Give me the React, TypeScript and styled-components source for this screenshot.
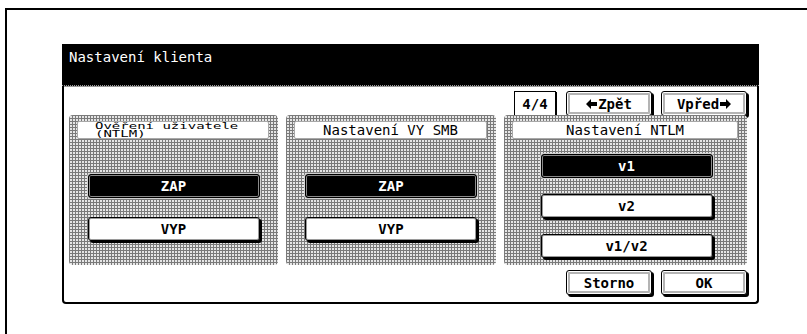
import React from 'react';
import styled, { createGlobalStyle, css } from 'styled-components';

const GlobalStyle = createGlobalStyle`
  html, body {
    margin: 0;
    padding: 0;
    background: #fff;
    overflow: hidden;
  }
  body {
    font-family: "DejaVu Sans Mono", "Liberation Mono", monospace;
    color: #000;
  }
`;

const stipple = css`
  background-color: #e6e6e6;
  background-image: linear-gradient(90deg, #7a7a7a 1px, transparent 1px),
    linear-gradient(#7a7a7a 1px, transparent 1px);
  background-size: 3px 3px;
`;

const Frame = styled.div`
  margin: 8px 0 0 5px;
  width: 802px;
  height: 326px;
  border-top: 2px solid #000;
  border-left: 2px solid #000;
  padding: 34px 0 0 55px;
  box-sizing: border-box;
`;

const Dialog = styled.div`
  width: 697px;
  display: flex;
  flex-direction: column;
`;

const TitleBar = styled.div`
  height: 42px;
  background: #000;
  color: #fff;
  font-size: 14px;
  line-height: 16px;
  padding: 5px 0 0 7px;
  box-sizing: border-box;
  border-bottom: 1px dotted #9a9a9a;
`;

const Body = styled.div`
  height: 218px;
  background: #fff;
  border: 2px solid #000;
  border-top: none;
  border-radius: 0 0 4px 4px;
  box-shadow: inset 0 1px 0 #9a9a9a;
  padding: 5px 10px 0 5px;
  box-sizing: border-box;
  display: flex;
  flex-direction: column;
`;

const NavRow = styled.div`
  display: flex;
  justify-content: flex-end;
  align-items: center;
  gap: 9px;
  height: 25px;
`;

const PageBox = styled.div`
  width: 42px;
  height: 25px;
  box-sizing: border-box;
  border: 1px solid #000;
  box-shadow: 1px 1px 0 #000;
  margin-right: 1px;
  display: flex;
  align-items: center;
  justify-content: center;
  font-size: 14px;
  font-weight: bold;
`;

const FrameButton = styled.button`
  width: 86px;
  height: 25px;
  box-sizing: border-box;
  padding: 0;
  background: #fff;
  border: 1px solid #000;
  border-radius: 3px;
  box-shadow: inset 0 0 0 1px #fff, inset 0 0 0 3px #b4b4b4,
    inset 0 0 0 4px #fff, 2px 2px 0 #000;
  font-family: "DejaVu Sans Mono", "Liberation Mono", monospace;
  font-size: 14px;
  font-weight: bold;
  color: #000;
  display: flex;
  align-items: center;
  justify-content: center;
  gap: 1px;
`;

const Arrow = styled.svg<{ $flip?: boolean }>`
  width: 11px;
  height: 10px;
  transform: ${(p) => (p.$flip ? 'scaleX(-1)' : 'none')};
`;

const Panels = styled.div`
  display: grid;
  grid-template-columns: 209px 210px 243px;
  column-gap: 8px;
  margin-top: -1px;
  height: 150px;
`;

const Panel = styled.div`
  ${stipple};
  border-radius: 4px;
  padding: 6px 9px 0 8px;
  box-sizing: border-box;
  display: flex;
  flex-direction: column;
`;

const Header = styled.div<{ $left?: boolean }>`
  height: 18px;
  background: #fff;
  border: 1px solid #a8a8a8;
  border-radius: 2px;
  box-sizing: border-box;
  display: flex;
  align-items: center;
  justify-content: ${(p) => (p.$left ? 'flex-start' : 'center')};
  padding-left: ${(p) => (p.$left ? '17px' : '0')};
  font-size: 14px;
  overflow: hidden;
`;

const SquashedText = styled.div`
  font-size: 14px;
  line-height: 12px;
  transform: scaleY(0.6);
  white-space: pre;
`;

const Options = styled.div<{ $top: number; $gap: number; $shift: number }>`
  display: flex;
  flex-direction: column;
  align-items: center;
  padding-top: ${(p) => p.$top}px;
  margin-left: ${(p) => p.$shift}px;
  gap: ${(p) => p.$gap}px;
`;

const Option = styled.button<{ $on?: boolean }>`
  width: 172px;
  height: 24px;
  box-sizing: border-box;
  padding: 0;
  border: 1px solid #000;
  border-radius: 3px;
  background: ${(p) => (p.$on ? '#000' : '#fff')};
  color: ${(p) => (p.$on ? '#fff' : '#000')};
  box-shadow: ${(p) =>
    p.$on
      ? 'inset 0 0 0 1px #8a8a8a, 0 0 0 1px #d0d0d0'
      : 'inset 0 0 0 1px #9a9a9a, 2px 2px 0 #000'};
  font-family: "DejaVu Sans Mono", "Liberation Mono", monospace;
  font-size: 14px;
  font-weight: bold;
`;

const Footer = styled.div`
  display: flex;
  justify-content: flex-end;
  gap: 9px;
  margin-top: 5px;
`;

const LeftArrow: React.FC<{ flip?: boolean }> = ({ flip }) => (
  <Arrow viewBox="0 0 11 10" $flip={flip}>
    <path d="M0 5 L5 0 L5 3 L11 3 L11 7 L5 7 L5 10 Z" fill="#000" />
  </Arrow>
);

const App: React.FC = () => (
  <>
    <GlobalStyle />
    <Frame>
      <Dialog>
        <TitleBar>Nastavení klienta</TitleBar>
        <Body>
          <NavRow>
            <PageBox>4/4</PageBox>
            <FrameButton>
              <LeftArrow />
              Zpět
            </FrameButton>
            <FrameButton>
              Vpřed
              <LeftArrow flip />
            </FrameButton>
          </NavRow>
          <Panels>
            <Panel>
              <Header $left>
                <SquashedText>{'Ověření uživatele\n(NTLM)'}</SquashedText>
              </Header>
              <Options $top={35} $gap={19} $shift={1}>
                <Option $on>ZAP</Option>
                <Option>VYP</Option>
              </Options>
            </Panel>
            <Panel>
              <Header>Nastavení VY SMB</Header>
              <Options $top={35} $gap={19} $shift={1}>
                <Option $on>ZAP</Option>
                <Option>VYP</Option>
              </Options>
            </Panel>
            <Panel>
              <Header>Nastavení NTLM</Header>
              <Options $top={15} $gap={16} $shift={3}>
                <Option $on>v1</Option>
                <Option>v2</Option>
                <Option>v1/v2</Option>
              </Options>
            </Panel>
          </Panels>
          <Footer>
            <FrameButton>Storno</FrameButton>
            <FrameButton>OK</FrameButton>
          </Footer>
        </Body>
      </Dialog>
    </Frame>
  </>
);

export default App;
